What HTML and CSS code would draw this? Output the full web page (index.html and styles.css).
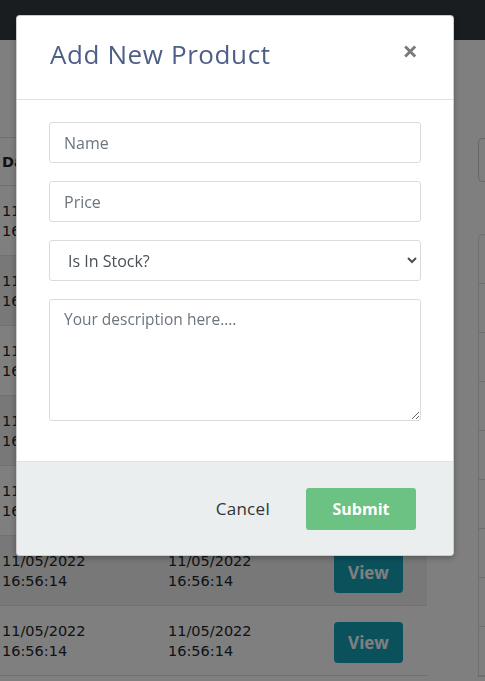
FILE: index.html
```html
<!DOCTYPE html>
<html>
<head>
<meta charset="utf-8">
<link rel="stylesheet" href="styles.css">
</head>
<body>
<div class="navbar"></div>
<div class="main">
  <div class="table">
    <div class="row head"><div class="cell">Date Created</div><div class="cell">Date Updated</div><div class="cell">Action</div></div>
    <div class="row"><div class="cell">11/05/2022<br>16:56:14</div><div class="cell">11/05/2022<br>16:56:14</div><div class="cell"><span class="view">View</span></div></div>
    <div class="row alt"><div class="cell">11/05/2022<br>16:56:14</div><div class="cell">11/05/2022<br>16:56:14</div><div class="cell"><span class="view">View</span></div></div>
    <div class="row"><div class="cell">11/05/2022<br>16:56:14</div><div class="cell">11/05/2022<br>16:56:14</div><div class="cell"><span class="view">View</span></div></div>
    <div class="row alt"><div class="cell">11/05/2022<br>16:56:14</div><div class="cell">11/05/2022<br>16:56:14</div><div class="cell"><span class="view">View</span></div></div>
    <div class="row"><div class="cell">11/05/2022<br>16:56:14</div><div class="cell">11/05/2022<br>16:56:14</div><div class="cell"><span class="view">View</span></div></div>
    <div class="row alt"><div class="cell">11/05/2022<br>16:56:14</div><div class="cell">11/05/2022<br>16:56:14</div><div class="cell"><span class="view">View</span></div></div>
    <div class="row"><div class="cell">11/05/2022<br>16:56:14</div><div class="cell">11/05/2022<br>16:56:14</div><div class="cell"><span class="view">View</span></div></div>
  </div>
  <div class="aside">
    <div class="abtn"></div>
    <div class="card">
      <div class="citem"></div><div class="citem"></div><div class="citem"></div><div class="citem"></div><div class="citem"></div><div class="citem"></div><div class="citem"></div><div class="citem"></div><div class="citem"></div>
    </div>
  </div>
</div>
<div class="overlay"></div>
<div class="modal">
  <div class="modal-header">
    <h2 class="modal-title">Add New Product</h2>
    <span class="close">&times;</span>
  </div>
  <div class="modal-body">
    <input class="field" type="text" placeholder="Name">
    <input class="field" type="text" placeholder="Price">
    <select class="field select">
      <option>Is In Stock?</option>
    </select>
    <textarea class="field area" placeholder="Your description here...."></textarea>
  </div>
  <div class="modal-footer">
    <span class="cancel">Cancel</span>
    <span class="submit">Submit</span>
  </div>
</div>
</body>
</html>
```
FILE: styles.css
```css
html, body {
  margin: 0;
  padding: 0;
  background: #ffffff;
  font-family: "Open Sans", sans-serif;
  overflow: hidden;
  height: 681px;
}
.navbar {
  height: 40px;
  background: #343a40;
}
.main {
  display: flex;
  padding-top: 97px;
}
.table {
  width: 427px;
  font-family: "DejaVu Sans", sans-serif;
  font-size: 14.5px;
  color: #212529;
  line-height: 20px;
}
.row {
  display: grid;
  grid-template-columns: 166px 166px 95px;
  height: 70px;
  align-items: center;
  border-bottom: 1px solid #dee2e6;
  box-sizing: border-box;
}
.row.head {
  height: 49px;
  border-top: 1px solid #dee2e6;
  border-bottom: 1px solid #dee2e6;
  font-weight: bold;
  white-space: nowrap;
  overflow: hidden;
}
.row.alt {
  background: #f0f0f0;
}
.cell {
  padding-left: 2px;
  overflow: hidden;
  white-space: nowrap;
}
.view {
  display: inline-block;
  width: 69px;
  height: 41px;
  line-height: 41px;
  text-align: center;
  background: #17a2b8;
  color: #fff;
  font-family: "Open Sans", sans-serif;
  font-weight: bold;
  font-size: 17px;
  border-radius: 4px;
  margin-top: 4px;
}
.aside {
  margin-left: 51px;
  flex: 1;
}
.abtn {
  height: 42px;
  border: 1px solid #ccc;
  border-right: none;
  border-radius: 5px 0 0 5px;
  margin-top: 1px;
}
.card {
  margin-top: 52px;
  border: 1px solid #ddd;
  border-right: none;
  border-radius: 5px 0 0 0;
}
.citem {
  height: 49px;
  border-bottom: 1px solid #ddd;
  box-sizing: border-box;
}
.overlay {
  position: fixed;
  inset: 0;
  background: rgba(0, 0, 0, 0.5);
}
.modal {
  position: fixed;
  left: 16px;
  top: 15px;
  width: 438px;
  height: 541px;
  box-sizing: border-box;
  background: #fff;
  border: 1px solid rgba(0, 0, 0, 0.2);
  border-radius: 4px;
  display: flex;
  flex-direction: column;
  overflow: hidden;
  box-shadow: 0 2px 6px rgba(0, 0, 0, 0.3);
}
.modal-header {
  height: 84px;
  box-sizing: border-box;
  border-bottom: 1px solid #dee2e6;
  display: flex;
  align-items: flex-start;
  justify-content: space-between;
  padding: 20px 34px 0 33px;
}
.modal-title {
  margin: 0;
  font-weight: normal;
  font-size: 26px;
  letter-spacing: 0.6px;
  color: #4e5f86;
  line-height: 36px;
}
.close {
  font-size: 27px;
  font-weight: bold;
  color: #7a7a7a;
  line-height: 28px;
  margin-top: 1px;
  margin-right: 1px;
}
.modal-body {
  padding: 22px 32px 0 32px;
  display: flex;
  flex-direction: column;
  gap: 18px;
  height: 361px;
  box-sizing: border-box;
}
.field {
  display: block;
  width: 372px;
  height: 41px;
  box-sizing: border-box;
  border: 1px solid #d9dcdf;
  border-radius: 3px;
  padding: 0 14px;
  font-family: "Open Sans", sans-serif;
  font-size: 16px;
  color: #495057;
  background: #fff;
  margin: 0;
}
.field::placeholder {
  color: #6c757d;
}
.select {
  padding-left: 14px;
  color: #495057;
  outline: none;
}
.area {
  height: 122px;
  padding: 8px 14px;
  resize: vertical;
  font-size: 15.5px;
}
.modal-footer {
  flex: 1;
  background: #eaeeef;
  border-top: 1px solid #dee2e6;
  display: flex;
  align-items: center;
  justify-content: flex-end;
  padding: 0 37px 0 0;
  gap: 36px;
}
.cancel {
  font-size: 17px;
  letter-spacing: 0.3px;
  color: #333;
}
.submit {
  display: inline-block;
  width: 110px;
  height: 42px;
  line-height: 42px;
  text-align: center;
  background: #6cc283;
  color: #fff;
  font-weight: bold;
  font-size: 16px;
  border-radius: 3px;
}
```
